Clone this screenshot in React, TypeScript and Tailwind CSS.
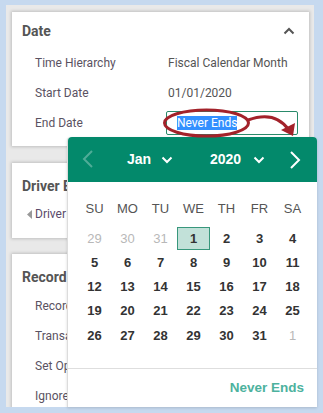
import React from "react";

const roboto = { fontFamily: "Roboto, 'Liberation Sans', Arial, sans-serif" };
const arial = { fontFamily: "'Liberation Sans', Arial, sans-serif" };

function ChevronUp() {
  return (
    <svg width="12" height="8" viewBox="0 0 12 8">
      <path d="M1.5 6.5 L6 2 L10.5 6.5" fill="none" stroke="#555" strokeWidth="2" />
    </svg>
  );
}

function BigChevron({ dir, opacity }: { dir: "left" | "right"; opacity: number }) {
  return (
    <svg width="12" height="20" viewBox="0 0 12 20" style={{ opacity }}>
      {dir === "left" ? (
        <path d="M10 2 L2 10 L10 18" fill="none" stroke="#fff" strokeWidth="2" />
      ) : (
        <path d="M2 2 L10 10 L2 18" fill="none" stroke="#fff" strokeWidth="2" />
      )}
    </svg>
  );
}

function SmallDown() {
  return (
    <svg width="12" height="8" viewBox="0 0 12 8">
      <path d="M1.5 1.5 L6 6 L10.5 1.5" fill="none" stroke="#fff" strokeWidth="2" />
    </svg>
  );
}

const weekdays = ["SU", "MO", "TU", "WE", "TH", "FR", "SA"];
const days: { d: number; other?: boolean; sel?: boolean }[][] = [
  [{ d: 29, other: true }, { d: 30, other: true }, { d: 31, other: true }, { d: 1, sel: true }, { d: 2 }, { d: 3 }, { d: 4 }],
  [{ d: 5 }, { d: 6 }, { d: 7 }, { d: 8 }, { d: 9 }, { d: 10 }, { d: 11 }],
  [{ d: 12 }, { d: 13 }, { d: 14 }, { d: 15 }, { d: 16 }, { d: 17 }, { d: 18 }],
  [{ d: 19 }, { d: 20 }, { d: 21 }, { d: 22 }, { d: 23 }, { d: 24 }, { d: 25 }],
  [{ d: 26 }, { d: 27 }, { d: 28 }, { d: 29 }, { d: 30 }, { d: 31 }, { d: 1, other: true }],
];

function Card({ children, className = "" }: { children: React.ReactNode; className?: string }) {
  return (
    <div className={"bg-white shadow-[0_0_3px_1px_rgba(0,0,0,0.18)] " + className}>{children}</div>
  );
}

export default function App() {
  return (
    <div className="relative w-[323px] h-[413px] overflow-hidden bg-[#c6d9ef]" style={roboto}>
      <div className="absolute left-[6px] top-[5px] w-[308px] h-[402px] overflow-hidden bg-[#e9e9e9] pl-[6px] pr-[5px] pt-[7px] flex flex-col">
        {/* Card 1 */}
        <Card className="h-[134px] shrink-0">
          <div className="h-[36px] pt-[11px] pl-[10px] pr-[14px] flex justify-between">
            <span className="text-[14px] leading-[16px] font-bold text-[#555]">Date</span>
            <span className="mt-[4px]"><ChevronUp /></span>
          </div>
          <div className="grid grid-cols-[156px_1fr] text-[12px] leading-[15px] text-[#5a5262]">
            <div className="h-[30px] flex items-center pl-[23px]">Time Hierarchy</div>
            <div className="h-[30px] flex items-center text-[#555]">Fiscal Calendar Month</div>
            <div className="h-[30px] flex items-center pl-[23px]">Start Date</div>
            <div className="h-[30px] flex items-center text-[#555]">01/01/2020</div>
            <div className="h-[30px] flex items-center pl-[23px]">End Date</div>
            <div className="h-[30px] flex items-center">
              <div className="ml-[-2px] w-[132px] h-[24px] border border-[#2a8a6a] rounded-[2px] flex items-center pl-[10px]">
                <span className="bg-[#3390ff] text-white text-[12px] leading-[14px]">Never Ends</span>
              </div>
            </div>
          </div>
        </Card>

        {/* Card 2 (partly hidden under the popup) */}
        <Card className="h-[75px] mt-[17px] shrink-0">
          <div className="w-[55px] overflow-hidden whitespace-nowrap">
            <div className="h-[36px] pt-[11px] pl-[10px]">
              <span className="text-[14px] leading-[16px] font-bold text-[#555]">Driver Based</span>
            </div>
            <div className="h-[30px] flex items-center pl-[15px] text-[12px] leading-[15px] text-[#5a4a6a]">
              <svg width="5" height="9" viewBox="0 0 5 9" className="mr-[3px] shrink-0">
                <path d="M5 0 L0 4.5 L5 9 Z" fill="#999" />
              </svg>
              <span>Driver Allocation</span>
            </div>
          </div>
        </Card>

        {/* Card 3 (partly hidden under the popup) */}
        <Card className="h-[200px] mt-[16px] shrink-0">
          <div className="w-[55px] overflow-hidden whitespace-nowrap">
            <div className="h-[37px] pt-[11px] pl-[10px]">
              <span className="text-[14px] leading-[16px] font-bold text-[#555]">Record Settings</span>
            </div>
            <div className="text-[12px] leading-[15px] text-[#5a5262] pl-[23px]">
              <div className="h-[30px] flex items-center">Record Type</div>
              <div className="h-[30px] flex items-center">Transaction Type</div>
              <div className="h-[30px] flex items-center">Set Opening Balance</div>
              <div className="h-[30px] flex items-center">Ignore Zero Values</div>
            </div>
          </div>
        </Card>
      </div>

      {/* Calendar popup */}
      <div
        className="absolute left-[67px] top-[137px] w-[250px] h-[270px] bg-white rounded-t-[4px] border-l border-[#dcdcdc] shadow-[0_1px_3px_rgba(0,0,0,0.15)] flex flex-col"
        style={arial}
      >
        <div className="h-[45px] bg-[#03896b] rounded-t-[4px] relative text-white shrink-0">
          <span className="absolute left-[14px] top-[12px]"><BigChevron dir="left" opacity={0.3} /></span>
          <div className="absolute left-[59px] top-[14px] flex items-center">
            <span className="text-[14px] leading-[16px] font-bold">Jan</span>
            <span className="ml-[10px] mt-[1px]"><SmallDown /></span>
          </div>
          <div className="absolute left-[142px] top-[14px] flex items-center">
            <span className="text-[14px] leading-[16px] font-bold">2020</span>
            <span className="ml-[12px] mt-[1px]"><SmallDown /></span>
          </div>
          <span className="absolute left-[221px] top-[13px]"><BigChevron dir="right" opacity={1} /></span>
        </div>

        <div className="h-[186px] shrink-0 pt-[14px]">
          <div className="ml-[10px] w-[231px] grid grid-cols-7">
            {weekdays.map((w) => (
              <div key={w} className="h-[24px] flex items-center justify-center text-[13px] leading-[15px] text-[#555]">
                {w}
              </div>
            ))}
          </div>
          <div className="ml-[10px] w-[231px] mt-[6px] grid grid-cols-7">
            {days.flat().map((c, i) => (
              <div key={i} className="h-[24.25px] flex items-center justify-center">
                {c.sel ? (
                  <div className="w-[33px] h-[23px] bg-[#c2e1d9] border border-[#38977c] flex items-center justify-center text-[13px] leading-[15px] font-bold text-[#333]">
                    {c.d}
                  </div>
                ) : (
                  <span className={"text-[13px] leading-[15px] " + (c.other ? "text-[#b8b8b8]" : "font-bold text-[#333]")}>
                    {c.d}
                  </span>
                )}
              </div>
            ))}
          </div>
        </div>

        <div className="border-t border-[#dedede] flex-1 flex items-center justify-end pr-[13px]">
          <span className="text-[13.5px] leading-[16px] font-bold text-[#4db29e]">Never Ends</span>
        </div>
      </div>

      {/* red annotation */}
      <svg className="absolute left-[155px] top-[105px]" width="150" height="40" viewBox="0 0 150 40">
        <ellipse cx="51.5" cy="18" rx="42" ry="13" fill="none" stroke="#a3222a" strokeWidth="3" />
        <path d="M93 15 Q 120 5 134 25" fill="none" stroke="#a3222a" strokeWidth="3" />
        <path d="M138 31 L126 25 L140 18 Z" fill="#a3222a" />
      </svg>
    </div>
  );
}
